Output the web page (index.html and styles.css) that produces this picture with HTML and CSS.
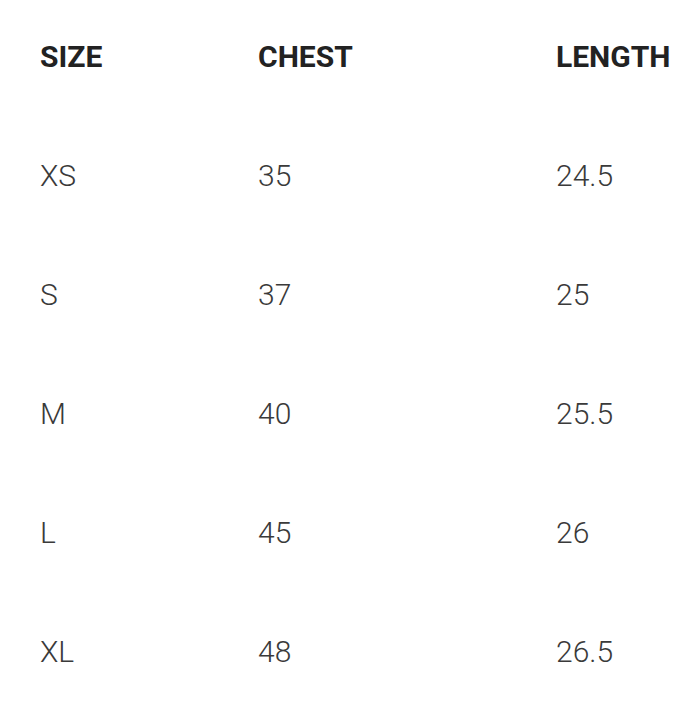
FILE: index.html
```html
<!DOCTYPE html>
<html>
<head>
<meta charset="utf-8">
<link rel="stylesheet" href="styles.css">
</head>
<body>
<div class="table">
  <div class="cell head">SIZE</div><div class="cell head">CHEST</div><div class="cell head">LENGTH</div>
  <div class="cell">XS</div><div class="cell">35</div><div class="cell">24.5</div>
  <div class="cell">S</div><div class="cell">37</div><div class="cell">25</div>
  <div class="cell">M</div><div class="cell">40</div><div class="cell">25.5</div>
  <div class="cell">L</div><div class="cell">45</div><div class="cell">26</div>
  <div class="cell">XL</div><div class="cell">48</div><div class="cell">26.5</div>
</div>
</body>
</html>
```
FILE: styles.css
```css
html, body {
  margin: 0;
  padding: 0;
  background: #ffffff;
}
body {
  font-family: Roboto, "Liberation Sans", sans-serif;
}
.table {
  display: grid;
  grid-template-columns: 218px 298px auto;
  row-gap: 79px;
  padding: 37px 0 0 40px;
}
.cell {
  font-size: 30px;
  line-height: 40px;
  font-weight: 300;
  color: #3a3a3a;
  white-space: nowrap;
}
.head {
  font-weight: 700;
  color: #222222;
}
```
